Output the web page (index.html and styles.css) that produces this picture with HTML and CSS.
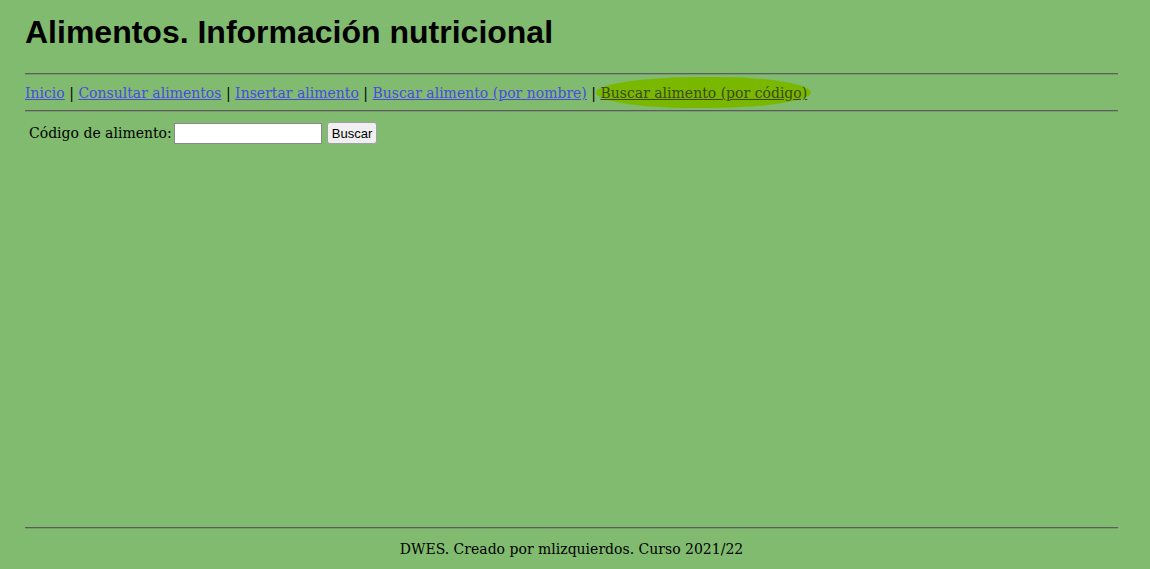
FILE: index.html
```html
<!DOCTYPE html>
<html lang="es">
<head>
<meta charset="utf-8">
<title>Alimentos</title>
<link rel="stylesheet" href="styles.css">
</head>
<body>
<div class="page">
  <header class="header">
    <h1 class="title">Alimentos. Información nutricional</h1>
  </header>
  <hr class="rule">
  <nav class="nav">
    <a href="#" class="nav-link">Inicio</a> | <a href="#" class="nav-link">Consultar alimentos</a> | <a href="#" class="nav-link">Insertar alimento</a> | <a href="#" class="nav-link">Buscar alimento (por nombre)</a> | <span class="mark"><a href="#" class="nav-link current">Buscar alimento (por código)</a></span>
  </nav>
  <hr class="rule">
  <main class="content">
    <form class="search">
      <label class="search-label" for="codigo">Código de alimento:</label>
      <input class="search-input" id="codigo" type="text">
      <button class="search-btn" type="button">Buscar</button>
    </form>
  </main>
  <footer class="footer">
    <hr class="rule">
    <p class="footer-text">DWES. Creado por mlizquierdos. Curso 2021/22</p>
  </footer>
</div>
</body>
</html>
```

FILE: styles.css
```css
html, body {
  margin: 0;
  padding: 0;
}
body {
  background: #80bb6f;
  font-family: "DejaVu Serif", Georgia, serif;
  font-size: 14px;
  color: #000;
}
.page {
  min-height: 569px;
  box-sizing: border-box;
  padding: 0 32px 0 25px;
  display: flex;
  flex-direction: column;
}
.title {
  font-family: "Liberation Sans", Arial, sans-serif;
  font-size: 32px;
  font-weight: bold;
  margin: 14px 0 0;
  line-height: 37px;
}
.rule {
  border: none;
  border-top: 1px solid #5a5f58;
  border-bottom: 1px solid #7a9a70;
  margin: 0;
  height: 0;
}
.header + .rule {
  margin-top: 22px;
}
.nav {
  padding: 8px 0 7px;
  line-height: 20px;
}
.nav-link {
  color: #4a4ae0;
}
.mark {
  display: inline-block;
  position: relative;
  padding: 0 1px;
  margin: 0 -1px;
}
.mark::before {
  content: "";
  position: absolute;
  left: -3px;
  right: -3px;
  top: -6px;
  bottom: -5px;
  background: #7ab800;
  border-radius: 50% 45% 50% 45% / 50% 50% 50% 50%;
  z-index: 0;
}
.current {
  position: relative;
  z-index: 1;
  color: #3b4a12;
}
.content {
  flex: 1;
}
.search {
  display: flex;
  align-items: center;
  margin: 10px 0 0 4px;
}
.search-label {
  margin-right: 2px;
}
.search-input {
  width: 142px;
  height: 17px;
  padding: 1px 2px;
  border: 1px solid #8a8a8a;
  background: #fff;
  margin: 0 5px 0 0;
}
.search-btn {
  font-family: "Liberation Sans", Tahoma, sans-serif;
  font-size: 13px;
  height: 22px;
  padding: 0 4px;
  border: 1px solid #a0a0a0;
  border-radius: 3px;
  background: #efefef;
  color: #000;
}
.footer-text {
  text-align: center;
  margin: 10px 0 10px;
  line-height: 20px;
}
```
